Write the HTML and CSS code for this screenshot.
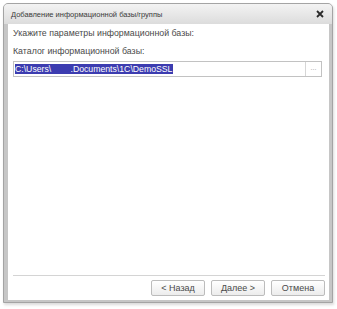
FILE: index.html
```html
<!DOCTYPE html>
<html lang="ru">
<head>
    <meta charset="UTF-8" />
    <title>Добавление информационной базы/группы</title>
    <link rel="stylesheet" href="styles.css">
</head>
<body>
<div class="window">
    <div class="titlebar">
        <span class="caption">Добавление информационной базы/группы</span>
        <svg class="close" width="8" height="8" viewBox="0 0 8 8">
            <path d="M1 1L7 7M7 1L1 7" stroke="#2a2a2a" stroke-width="1.8" />
        </svg>
    </div>

    <div class="client">
        <div class="label first">Укажите параметры информационной базы:</div>
        <div class="label">Каталог информационной базы:</div>

        <div class="field">
            <div class="field-text"><span class="selected">C:\Users\        .Documents\1C\DemoSSL</span></div>
            <div class="field-btn">...</div>
        </div>

        <div class="spacer"></div>

        <div class="footer">
            <button class="btn">&lt; Назад</button>
            <button class="btn">Далее &gt;</button>
            <button class="btn">Отмена</button>
        </div>
    </div>
</div>
</body>
</html>
```

FILE: styles.css
```css
* {
    margin: 0;
    padding: 0;
    box-sizing: border-box;
    font-family: "Liberation Sans", Arial, sans-serif;
}

body {
    background: #ffffff;
    width: 337px;
    height: 309px;
    overflow: hidden;
}

.window {
    margin: 3px 0 0 3px;
    width: 330px;
    height: 300px;
    border: 1px solid #a4a4a4;
    border-radius: 5px 5px 0 0;
    background: #c6c6c6;
    padding: 0 3px 2px 4px;
    display: flex;
    flex-direction: column;
    box-shadow: 1px 2px 3px rgba(0, 0, 0, 0.15);
}

.titlebar {
    height: 20px;
    margin: 0 -3px 0 -4px;
    padding: 0 7px 0 7px;
    border-radius: 4px 4px 0 0;
    background: linear-gradient(#f3f3f3, #dcdcdc);
    display: flex;
    align-items: center;
    justify-content: space-between;
}

.caption {
    font-size: 7.5px;
    color: #3a3a3a;
}

.close {
    margin-right: 1px;
}

.client {
    flex: 1;
    background: #ffffff;
    display: flex;
    flex-direction: column;
    padding: 3px 7px 4px 5px;
}

.label {
    font-size: 8.8px;
    line-height: 12px;
    color: #4a4a4a;
    margin-top: 6px;
}

.label.first {
    margin-top: 0;
}

.field {
    margin-top: 4px;
    height: 16px;
    border: 1px solid #c2c2c2;
    display: flex;
    align-items: center;
    background: #fff;
}

.field-text {
    flex: 1;
    padding-left: 1px;
    font-size: 8.7px;
    line-height: 12px;
}

.selected {
    background: #3c3cb0;
    color: #ffffff;
    white-space: pre;
    padding-right: 1px;
}

.field-btn {
    width: 16px;
    height: 14px;
    border-left: 1px solid #d6d6d6;
    font-size: 7px;
    color: #9a9a9a;
    text-align: center;
    line-height: 12px;
}

.spacer {
    flex: 1;
}

.footer {
    border-top: 1px solid #d4d4d4;
    margin-right: -3px;
    padding-top: 4px;
    display: flex;
    justify-content: flex-end;
    gap: 6px;
}

.btn {
    width: 54px;
    height: 16px;
    border: 1px solid #bcbcbc;
    border-radius: 2px;
    background: linear-gradient(#ffffff, #ececec);
    font-size: 9px;
    color: #4a4a4a;
}
```
